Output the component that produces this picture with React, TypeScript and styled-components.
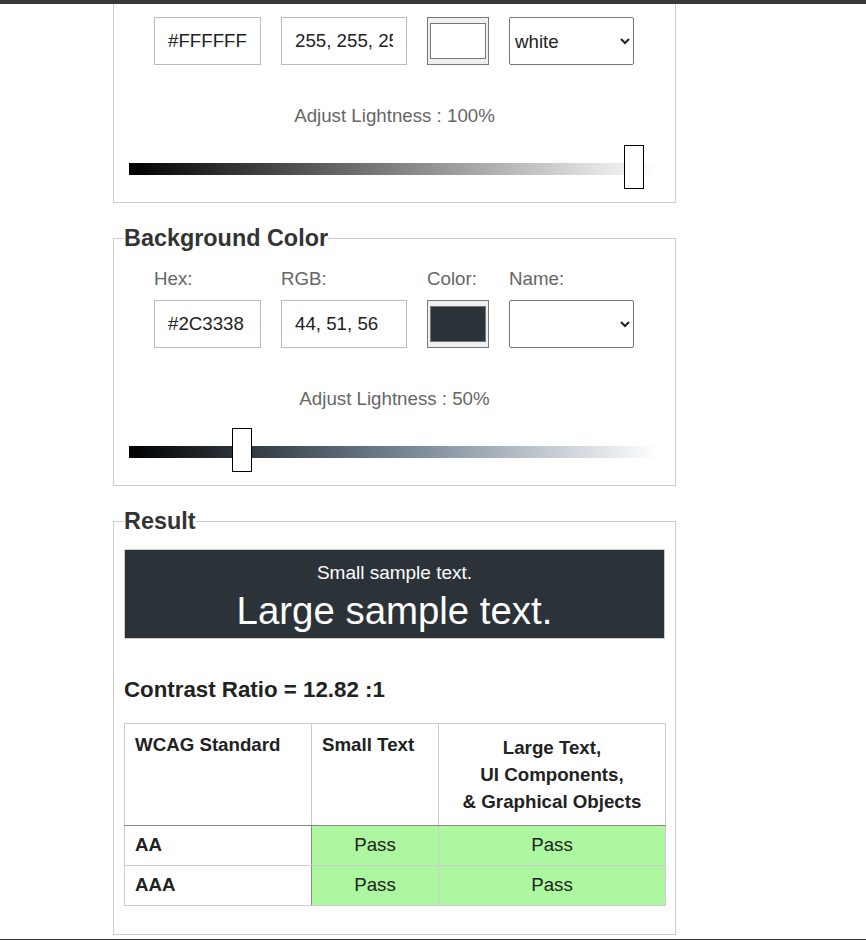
import React from "react";
import styled, { createGlobalStyle } from "styled-components";

const Global = createGlobalStyle`
  html, body { margin: 0; padding: 0; background: #fff; overflow: hidden; height: 940px; }
  body { font-family: "Liberation Sans", Arial, sans-serif; color: #222; }
`;

const TopBar = styled.div`
  position: fixed; top: 0; left: 0; right: 0; height: 4px; background: #38393b; z-index: 10;
`;
const BottomLine = styled.div`
  position: fixed; bottom: 0; left: 0; right: 0; height: 1px; background: #3d3838; z-index: 10;
`;

const Page = styled.main`
  padding-left: 113px;
  margin-top: -58px;
`;

const Panel = styled.fieldset<{ $pb: number }>`
  box-sizing: border-box;
  width: 563px;
  min-width: 0;
  margin: 0 0 22px;
  padding: 0 10px ${(p) => p.$pb}px;
  border: 1px solid #ccc;
`;

const Legend = styled.legend`
  padding: 0;
  font-size: 23.4px;
  font-weight: bold;
  color: #333;
`;

const FieldRow = styled.div`
  display: flex;
  gap: 20px;
  margin-top: 16px;
  padding-left: 30px;
`;

const Field = styled.label`
  display: flex;
  flex-direction: column;
`;

const FieldLabel = styled.span`
  font-size: 18.72px;
  color: #666;
  margin-bottom: 10px;
`;

const TextBox = styled.input<{ $w: number }>`
  box-sizing: border-box;
  width: ${(p) => p.$w}px;
  height: 48px;
  border: 1px solid #bbb;
  border-radius: 0;
  padding: 0 13px;
  font-family: inherit;
  font-size: 18.72px;
  color: #222;
  background: #fff;
  outline: none;
`;

const SwatchBox = styled.div`
  box-sizing: border-box;
  width: 62px;
  height: 48px;
  border: 1px solid #767676;
  background: #efefef;
  padding: 5px 2px;
  display: flex;
`;

const SwatchFill = styled.div<{ $c: string }>`
  flex: 1;
  border: 1px solid #777;
  background: ${(p) => p.$c};
`;

const NameSelect = styled.select`
  box-sizing: border-box;
  width: 125px;
  height: 48px;
  border: 1px solid #767676;
  border-radius: 2px;
  padding: 0 2px 0 1px;
  font-family: inherit;
  font-size: 18.72px;
  color: #222;
  background: #fff;
`;

const Lightness = styled.div`
  margin-top: 40px;
  text-align: center;
  font-size: 18.72px;
  color: #666;
`;

const Slider = styled.div`
  position: relative;
  box-sizing: border-box;
  height: 44px;
  padding-top: 18px;
  margin: 18px 7px 0 5px;
`;

const Track = styled.div<{ $g: string }>`
  height: 12px;
  background: ${(p) => p.$g};
`;

const Thumb = styled.div`
  position: absolute;
  top: 0;
  box-sizing: border-box;
  width: 20px;
  height: 44px;
  border: 1px solid #000;
  background: #fff;
`;

const Sample = styled.div`
  margin-top: 14px;
  border: 1px solid #ccc;
  background: #2c3338;
  color: #fff;
  text-align: center;
  padding: 12px 0 5px;
`;

const SmallSample = styled.div`
  font-size: 19px;
`;

const LargeSample = styled.div`
  font-size: 38.4px;
  margin-top: 5px;
`;

const Ratio = styled.h3`
  margin: 38px 0 0;
  font-size: 22.3px;
  font-weight: bold;
  color: #222;
`;

const Table = styled.table`
  margin-top: 20px;
  width: 541px;
  border-collapse: collapse;
  table-layout: fixed;
  font-size: 18.72px;
  color: #222;
`;

const HeadCell = styled.th<{ $center?: boolean }>`
  border: 1px solid #ccc;
  border-bottom: 1px solid #888;
  padding: 10px;
  text-align: ${(p) => (p.$center ? "center" : "left")};
  vertical-align: top;
  font-weight: bold;
  line-height: ${(p) => (p.$center ? "27px" : "normal")};
`;

const RowHead = styled.th`
  border: 1px solid #ccc;
  border-right: 1px solid #888;
  padding: 8px 10px 9px;
  text-align: left;
  font-weight: bold;
`;

const PassCell = styled.td`
  border: 1px solid #ccc;
  padding: 8px 10px 9px;
  text-align: center;
  background: #acf79f;
`;

type ColorPanelProps = {
  title: string;
  hex: string;
  rgb: string;
  swatch: string;
  name: string;
  lightness: string;
  gradient: string;
  thumb: number;
};

function ColorPanel(p: ColorPanelProps) {
  return (
    <Panel $pb={13}>
      <Legend>{p.title}</Legend>
      <FieldRow>
        <Field>
          <FieldLabel>Hex:</FieldLabel>
          <TextBox $w={107} defaultValue={p.hex} />
        </Field>
        <Field>
          <FieldLabel>RGB:</FieldLabel>
          <TextBox $w={126} defaultValue={p.rgb} />
        </Field>
        <Field as="div">
          <FieldLabel>Color:</FieldLabel>
          <SwatchBox>
            <SwatchFill $c={p.swatch} />
          </SwatchBox>
        </Field>
        <Field>
          <FieldLabel>Name:</FieldLabel>
          <NameSelect defaultValue={p.name}>
            <option value=""></option>
            <option value="white">white</option>
            <option value="black">black</option>
          </NameSelect>
        </Field>
      </FieldRow>
      <Lightness>Adjust Lightness : {p.lightness}</Lightness>
      <Slider>
        <Track $g={p.gradient} />
        <Thumb style={{ left: p.thumb }} />
      </Slider>
    </Panel>
  );
}

export default function App() {
  return (
    <>
      <Global />
      <TopBar />
      <Page>
        <ColorPanel
          title="Foreground Color"
          hex="#FFFFFF"
          rgb="255, 255, 255"
          swatch="#ffffff"
          name="white"
          lightness="100%"
          gradient="linear-gradient(to right, #000, #808080, #fff)"
          thumb={495}
        />
        <ColorPanel
          title="Background Color"
          hex="#2C3338"
          rgb="44, 51, 56"
          swatch="#2c3338"
          name=""
          lightness="50%"
          gradient="linear-gradient(to right, #000, #2c3338 20%, #70808f 50%, #fff)"
          thumb={103}
        />
        <Panel $pb={28}>
          <Legend>Result</Legend>
          <Sample>
            <SmallSample>Small sample text.</SmallSample>
            <LargeSample>Large sample text.</LargeSample>
          </Sample>
          <Ratio>Contrast Ratio = 12.82 :1</Ratio>
          <Table>
            <colgroup>
              <col style={{ width: 187 }} />
              <col style={{ width: 127 }} />
              <col style={{ width: 227 }} />
            </colgroup>
            <thead>
              <tr>
                <HeadCell>WCAG Standard</HeadCell>
                <HeadCell>Small Text</HeadCell>
                <HeadCell $center>
                  Large Text,
                  <br />
                  UI Components,
                  <br />
                  &amp; Graphical Objects
                </HeadCell>
              </tr>
            </thead>
            <tbody>
              <tr>
                <RowHead scope="row">AA</RowHead>
                <PassCell>Pass</PassCell>
                <PassCell>Pass</PassCell>
              </tr>
              <tr>
                <RowHead scope="row">AAA</RowHead>
                <PassCell>Pass</PassCell>
                <PassCell>Pass</PassCell>
              </tr>
            </tbody>
          </Table>
        </Panel>
      </Page>
      <BottomLine />
    </>
  );
}
